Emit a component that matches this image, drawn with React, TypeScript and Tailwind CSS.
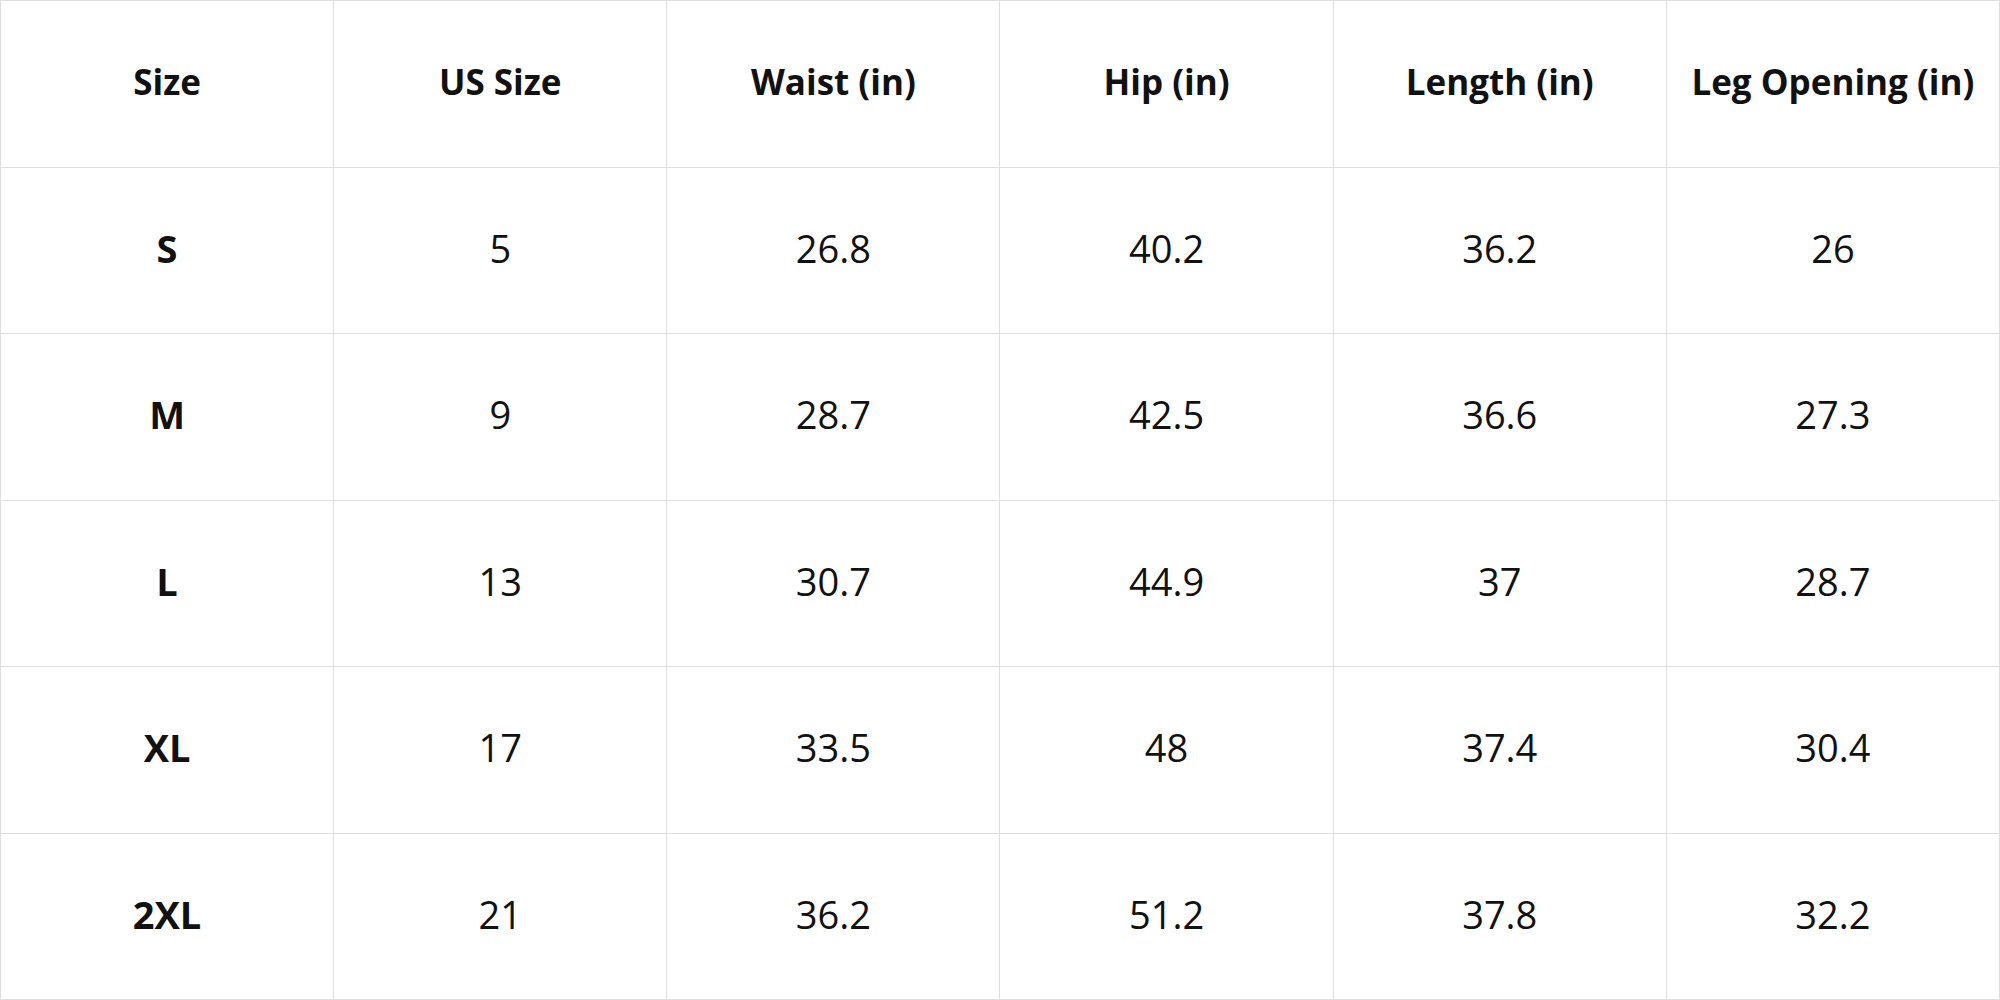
const headers = ["Size", "US Size", "Waist (in)", "Hip (in)", "Length (in)", "Leg Opening (in)"];

const rows: string[][] = [
  ["S", "5", "26.8", "40.2", "36.2", "26"],
  ["M", "9", "28.7", "42.5", "36.6", "27.3"],
  ["L", "13", "30.7", "44.9", "37", "28.7"],
  ["XL", "17", "33.5", "48", "37.4", "30.4"],
  ["2XL", "21", "36.2", "51.2", "37.8", "32.2"],
];

function Cell({ children, className }: { children: React.ReactNode; className: string }) {
  return (
    <div
      className={`flex items-center justify-center pb-1 border-r border-b border-[#dedede] text-[#111111] ${className}`}
    >
      {children}
    </div>
  );
}

export default function App() {
  return (
    <div className="w-[2000px] h-[1000px] bg-white font-['Open_Sans',sans-serif]">
      <div className="grid grid-cols-6 grid-rows-6 w-full h-full border-t border-l border-[#dedede]">
        {headers.map((h) => (
          <Cell key={h} className="text-[35px] font-bold">
            {h}
          </Cell>
        ))}
        {rows.map((row) =>
          row.map((value, i) => (
            <Cell
              key={row[0] + i}
              className={i === 0 ? "text-[38px] font-bold" : "text-[38px] font-normal"}
            >
              {value}
            </Cell>
          ))
        )}
      </div>
    </div>
  );
}
